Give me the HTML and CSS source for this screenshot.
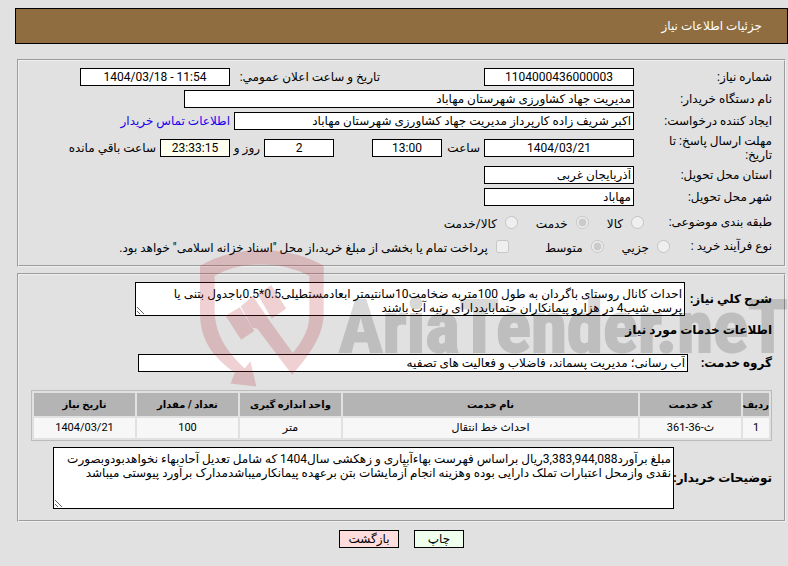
FILE: index.html
```html
<!DOCTYPE html>
<html lang="fa" dir="rtl">
	<head>
		<meta charset="UTF-8">
		<title>جزئیات اطلاعات نیاز</title>
		<link rel="stylesheet" href="styles.css">
	</head>
	<body>
		<h1 class="title">جزئیات اطلاعات نیاز</h1>

		<form class="need">
			<fieldset class="box info">
				<div class="row">
					<label class="name" for="number">شماره نیاز:</label>
					<input class="text center w150" id="number" type="text" value="1104000436000003" readonly>
					<label class="announce" for="announce">تاریخ و ساعت اعلان عمومي:</label>
					<input class="text center w150" id="announce" type="text" dir="ltr" value="1404/03/18 - 11:54" readonly>
				</div>
				<div class="row">
					<label class="name" for="org">نام دستگاه خریدار:</label>
					<input class="text w450" id="org" type="text" value="مدیریت جهاد کشاورزی شهرستان مهاباد" readonly>
				</div>
				<div class="row">
					<label class="name" for="creator">ایجاد کننده درخواست:</label>
					<input class="text w400" id="creator" type="text" value="اکبر شریف زاده کارپرداز مدیریت جهاد کشاورزی شهرستان مهاباد" readonly>
					<a class="contact" href="#">اطلاعات تماس خریدار</a>
				</div>
				<div class="row">
					<label class="name" for="date">مهلت ارسال پاسخ: تا تاریخ:</label>
					<input class="text center w150" id="date" type="text" value="1404/03/21" readonly>
					<label class="hour" for="hour">ساعت</label>
					<input class="text center w70" id="hour" type="text" value="13:00" readonly>
					<input class="text center w70 days" id="days" type="text" value="2" readonly>
					<label class="and" for="days">روز و</label>
					<input class="text center w70 timer" id="timer" type="text" value="23:33:15" readonly>
					<label class="remain" for="timer">ساعت باقي مانده</label>
				</div>
				<div class="row">
					<label class="name" for="state">استان محل تحویل:</label>
					<input class="text w150" id="state" type="text" value="آذربایجان غربی" readonly>
				</div>
				<div class="row">
					<label class="name" for="city">شهر محل تحویل:</label>
					<input class="text w150" id="city" type="text" value="مهاباد" readonly>
				</div>
				<div class="row choices">
					<span class="subject">طبقه بندی موضوعی:</span>
					<label class="choice"><input type="radio" name="subject" disabled><span>کالا</span></label>
					<label class="choice"><input type="radio" name="subject" checked disabled><span>خدمت</span></label>
					<label class="choice"><input type="radio" name="subject" disabled><span>کالا/خدمت</span></label>
				</div>
				<div class="row choices">
					<span class="process">نوع فرآیند خرید :</span>
					<label class="choice"><input type="radio" name="process" disabled><span>جزیي</span></label>
					<label class="choice"><input type="radio" name="process" checked disabled><span>متوسط</span></label>
					<label class="choice treasury"><input type="checkbox" disabled><span>پرداخت تمام یا بخشی از مبلغ خرید،از محل "اسناد خزانه اسلامی" خواهد بود.</span></label>
				</div>
			</fieldset>

			<fieldset class="box service">
				<div class="row">
					<label class="bold about-name" for="about">شرح کلي نیاز:</label>
					<textarea class="text about" id="about" readonly>احداث کانال روستای باگردان به طول 100متربه ضخامت10سانتیمتر ابعادمستطیلی0.5*0.5باجدول بتنی یا
پرسی شیب4 در هزارو پیمانکاران حتمابایددارای رتبه آب باشند</textarea>
				</div>
				<h2 class="bold heading">اطلاعات خدمات مورد نیاز</h2>
				<div class="row">
					<label class="bold group-name" for="group">گروه خدمت:</label>
					<input class="text w550" id="group" type="text" value="آب رسانی؛ مدیریت پسماند، فاضلاب و فعالیت های تصفیه" readonly>
				</div>
				<table class="items">
					<thead>
						<tr>
							<th class="c-row">ردیف</th>
							<th class="c-mid">کد خدمت</th>
							<th>نام خدمت</th>
							<th class="c-mid">واحد اندازه گیری</th>
							<th class="c-mid">تعداد / مقدار</th>
							<th class="c-mid">تاریخ نیاز</th>
						</tr>
					</thead>
					<tbody>
						<tr>
							<td>1</td>
							<td>ث-36-361</td>
							<td>احداث خط انتقال</td>
							<td>متر</td>
							<td>100</td>
							<td>1404/03/21</td>
						</tr>
					</tbody>
				</table>
				<div class="row">
					<label class="bold notes-name" for="notes">توضیحات خریدار:</label>
					<textarea class="text notes" id="notes" readonly>مبلغ برآورد3,383,944,088ریال براساس فهرست بهاءآبیاری و زهکشی سال1404 که شامل تعدیل آحادبهاء نخواهدبودوبصورت نقدی وازمحل اعتبارات تملک دارایی بوده وهزینه انجام آزمایشات بتن برعهده پیمانکارمیباشدمدارک برآورد پیوستی میباشد</textarea>
				</div>

				<div class="watermark" dir="ltr">
					<svg class="shield" viewBox="30 15 374 412">
						<path d="M30 62Q110 15 216 15Q322 15 403 62V205C403 270 365 325 308 391L203 252L188 249L153 185L189 153L243 232L310 325C345 280 360 250 360 205V93Q300 58 216 58Q130 58 74 93V190C74 270 110 318 165 372L182 350L200 426L122 417L135 385C60 330 30 280 30 200Z"/>
						<path d="M107 213L150 187L194 259L154 285Z"/>
						<path d="M203 146L245 121L290 191L246 222Z"/>
					</svg>
					<span class="brand">AriaTender.neT</span>
				</div>
			</fieldset>

			<div class="buttons">
				<button class="btn print" type="button">چاپ</button>
				<button class="btn back" type="button">بازگشت</button>
			</div>
		</form>
	</body>
</html>
```
FILE: styles.css
```css
* {
	box-sizing: border-box;
}
body {
	margin: 8px 0 0 15px;
	background-color: #e1e1e1;
	color: #000;
	font: 12px/14px Roboto, "DejaVu Sans", sans-serif;
}
.title {
	margin: 0 0 15px;
	padding: 10px 25px;
	border: 1px solid #000;
	background-color: #8f6d40;
	color: #fff;
	font-size: 12px;
	line-height: 14px;
	font-weight: normal;
}
.need {
	padding: 0 2px;
}
.box {
	position: relative;
	min-width: 0;
	margin: 0 0 6px;
	padding: 7px 12px;
	border: 2px groove #f0f0f0;
}
.row {
	display: flex;
	align-items: center;
	margin-bottom: 4px;
}
.name {
	width: 138px;
	padding-left: 20px;
}

/* inputs */
.text {
	height: 18px;
	margin: 0;
	padding: 0 2px;
	border: 1px solid #000;
	border-radius: 0;
	outline: none;
	background-color: #fff;
	color: #000;
	font: inherit;
}
.center {
	text-align: center;
}
.w70 {
	width: 70px;
}
.w150 {
	width: 150px;
}
.w400 {
	width: 400px;
}
.w450 {
	width: 450px;
}
.w550 {
	width: 550px;
}
.announce {
	width: 254px;
	padding-right: 104px;
	white-space: nowrap;
}
.contact {
	margin-right: 4px;
	color: #1a00ee;
	text-decoration: none;
}
.hour {
	width: 42px;
	padding-right: 4px;
}
.days {
	margin-right: 38px;
}
.and {
	width: 34px;
	padding-right: 4px;
	white-space: nowrap;
}
.timer {
	background-color: #fffff0;
}
.remain {
	margin-right: 4px;
}

/* radios */
.choices {
	height: 24px;
	margin: 0;
}
.subject {
	width: 128px;
}
.process {
	width: 102px;
}
.choice {
	display: flex;
	align-items: center;
	gap: 8px;
	margin-left: 18px;
}
.choice input {
	width: 13px;
	height: 13px;
	margin: 0;
}
.choice span {
	padding-top: 4px;
}
.treasury {
	margin-right: 18px;
}

/* service */
.bold {
	font-size: 12px;
	font-weight: bold;
	white-space: nowrap;
}
.heading {
	margin: 0 0 14px;
	line-height: 20px;
}
textarea.text {
	padding: 4px 2px;
	overflow: hidden;
}
.about-name {
	width: 87px;
}
.about {
	width: 550px;
	height: 34px;
}
.group-name {
	width: 84px;
}
.notes-name {
	width: 98px;
}
.notes {
	width: 621px;
	height: 62px;
}
.items {
	width: 100%;
	margin: 18px 0 6px;
	border: 1px solid #bbb;
	border-spacing: 2px;
	table-layout: fixed;
	font-size: 11px;
	text-align: center;
}
.items th {
	height: 23px;
	padding: 0;
	background-color: #b4b4b4;
	font-size: 10px;
}
.items td {
	height: 20px;
	padding: 0;
	background-color: #f7f7f7;
}
.c-row {
	width: 26px;
}
.c-mid {
	width: 101px;
}

/* logo over the form */
.watermark {
	position: absolute;
	top: -25px;
	left: 181px;
	display: flex;
	align-items: center;
	gap: 15px;
	pointer-events: none;
}
.shield {
	width: 124px;
	height: 137px;
	fill: #b42028;
	opacity: 0.2;
}
.brand {
	padding-top: 16px;
	font: bold 73px/80px "Liberation Sans Narrow", "Roboto Condensed", "Open Sans Condensed", sans-serif;
	-webkit-text-stroke: 2px #000;
	opacity: 0.15;
}

.buttons {
	display: flex;
	justify-content: center;
	gap: 15px;
	padding-top: 2px;
}
.btn {
	height: 18px;
	padding: 0;
	border: 1px solid #000;
	color: #000;
	font: inherit;
}
.print {
	width: 50px;
	background-color: #eeffee;
}
.back {
	width: 60px;
	background-color: #ffdddd;
}
```
